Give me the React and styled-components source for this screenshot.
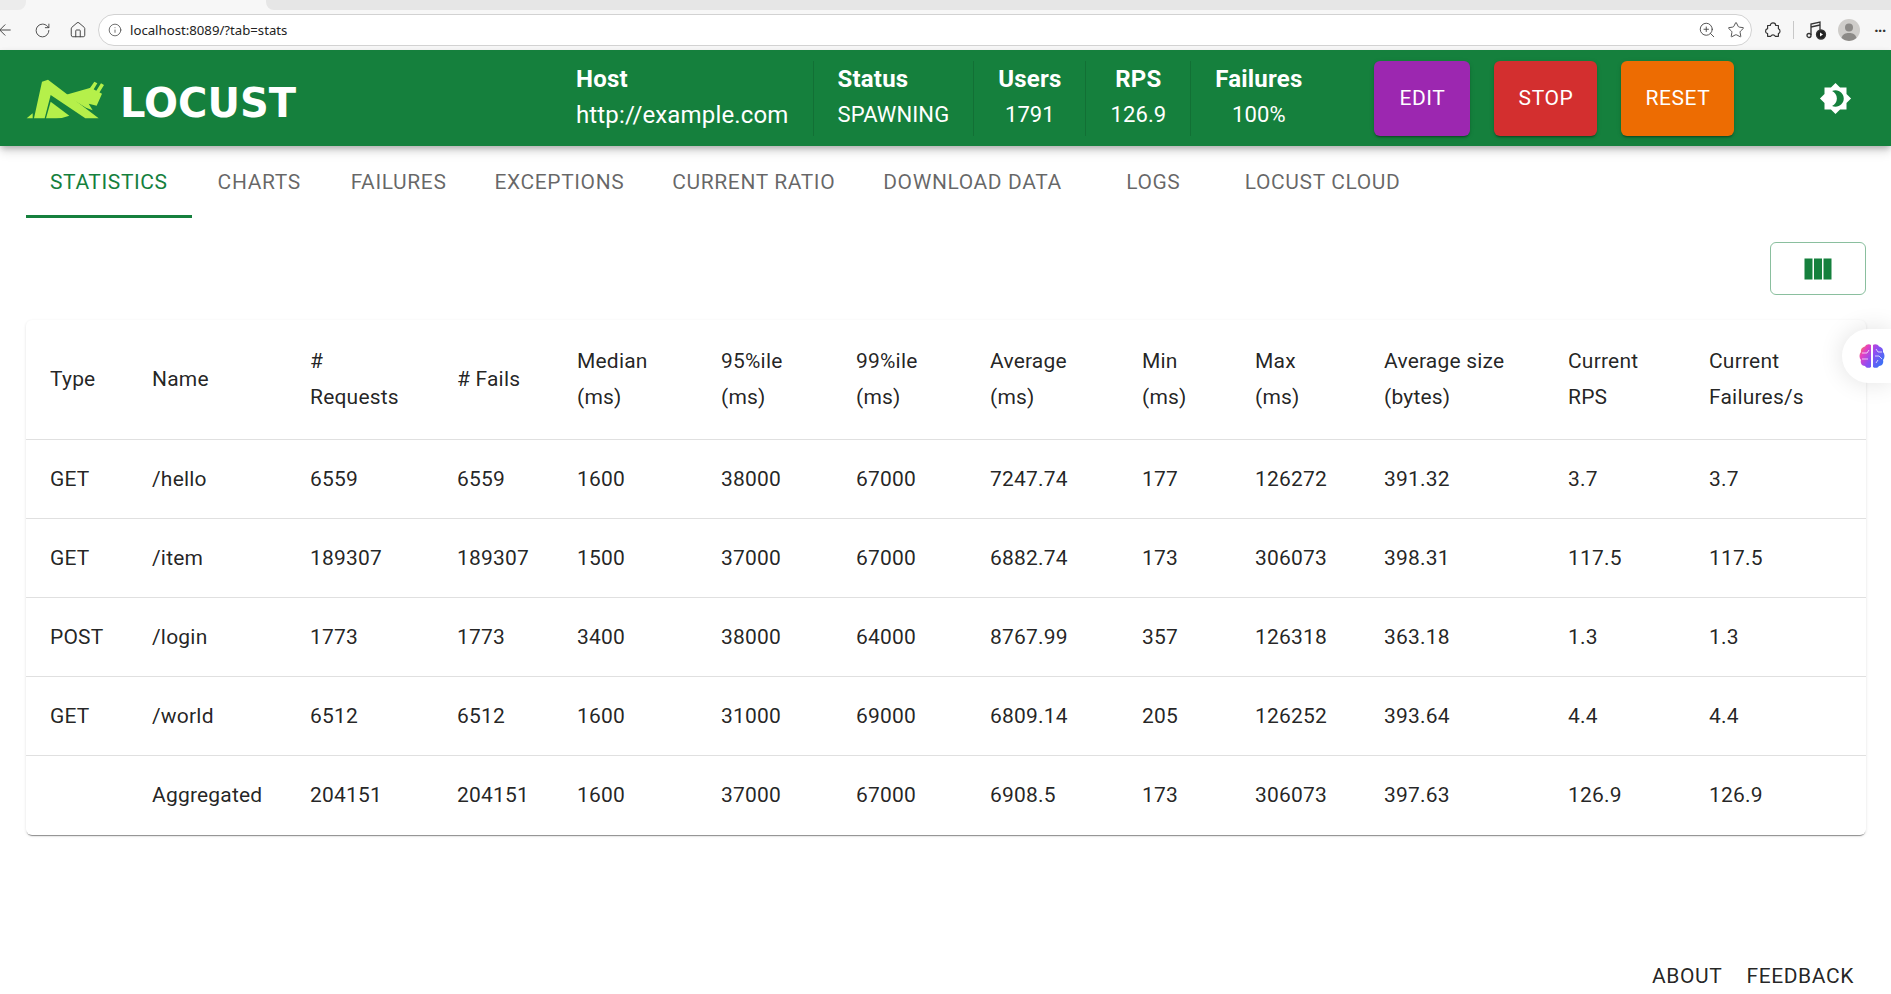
import React from "react"
import styled, { createGlobalStyle } from "styled-components"
import { ArrowLeft, RotateCw, Home, Info, ZoomIn, Star } from "lucide-react"

const GlobalStyle = createGlobalStyle`
body{
    margin: 0;
    background: #fff;
    font-family: Roboto, "Liberation Sans", sans-serif;
    overflow: hidden;
}
`

const tabs = ["Statistics", "Charts", "Failures", "Exceptions", "Current ratio", "Download data", "Logs", "Locust Cloud"]

const columns = [
    { label: ["Type"], width: 102 },
    { label: ["Name"], width: 158 },
    { label: ["#", "Requests"], width: 147 },
    { label: ["# Fails"], width: 120 },
    { label: ["Median", "(ms)"], width: 144 },
    { label: ["95%ile", "(ms)"], width: 135 },
    { label: ["99%ile", "(ms)"], width: 134 },
    { label: ["Average", "(ms)"], width: 152 },
    { label: ["Min", "(ms)"], width: 113 },
    { label: ["Max", "(ms)"], width: 129 },
    { label: ["Average size", "(bytes)"], width: 184 },
    { label: ["Current", "RPS"], width: 141 },
    { label: ["Current", "Failures/s"], width: 181 },
]

const rows = [
    ["GET", "/hello", "6559", "6559", "1600", "38000", "67000", "7247.74", "177", "126272", "391.32", "3.7", "3.7"],
    ["GET", "/item", "189307", "189307", "1500", "37000", "67000", "6882.74", "173", "306073", "398.31", "117.5", "117.5"],
    ["POST", "/login", "1773", "1773", "3400", "38000", "64000", "8767.99", "357", "126318", "363.18", "1.3", "1.3"],
    ["GET", "/world", "6512", "6512", "1600", "31000", "69000", "6809.14", "205", "126252", "393.64", "4.4", "4.4"],
    ["", "Aggregated", "204151", "204151", "1600", "37000", "67000", "6908.5", "173", "306073", "397.63", "126.9", "126.9"],
]

const stats = [
    { title: "Host", value: "http://example.com", host: true, align: "flex-start" },
    { title: "Status", value: "SPAWNING", align: "flex-start" },
    { title: "Users", value: "1791", align: "center" },
    { title: "RPS", value: "126.9", align: "center" },
    { title: "Failures", value: "100%", align: "center" },
]

function LocustMark(){
    return(
        <svg width="100" height="55" viewBox="0 0 300 165" fill="#b5f04a">
            <path d="M66 32L84 26L236 142H196L92 72L74 142H42Z" />
            <path d="M20 142L38 127V142Z" />
            <path d="M78 142L92 92L148 134Q128 142 108 142Z" />
            <path d="M136 72L212 50L246 68L230 104L206 98L218 118L198 110Z" />
            <path d="M208 54L223 32L232 37L218 60ZM227 62L243 37L252 42L236 68Z" />
        </svg>
    )
}

function ThemeIcon(){
    return(
        <svg width="33" height="33" viewBox="0 0 24 24" fill="#fff">
            <path d="M20 8.69V4h-4.69L12 .69 8.69 4H4v4.69L.69 12 4 15.31V20h4.69L12 23.31 15.31 20H20v-4.69L23.31 12 20 8.69zM12 18c-.89 0-1.74-.2-2.5-.55C11.56 16.5 13 14.42 13 12s-1.44-4.5-3.5-5.45C10.26 6.2 11.11 6 12 6c3.31 0 6 2.69 6 6s-2.69 6-6 6z" />
        </svg>
    )
}

function ColumnsIcon(){
    return(
        <svg width="36" height="36" viewBox="0 0 24 24" fill="#15803d">
            <path d="M14.67 5v14H9.33V5h5.34zm1 14H21V5h-5.33v14zm-7.34 0V5H3v14h5.33z" />
        </svg>
    )
}

function BrainIcon(){
    return(
        <svg width="32" height="30" viewBox="0 0 30 30">
            <defs>
                <linearGradient id="brainGradient" gradientUnits="userSpaceOnUse" x1="2" y1="4" x2="26" y2="20">
                    <stop offset="0" stopColor="#f99a2a" />
                    <stop offset="0.28" stopColor="#e63fc2" />
                    <stop offset="0.6" stopColor="#8f4df2" />
                    <stop offset="1" stopColor="#3f6ff5" />
                </linearGradient>
            </defs>
            <path fill="url(#brainGradient)" d="M14 4v22c-2 1.5-5 1-6-1-3 0-5-3-4-6-2-2-2-6 0-8-.5-3 1.5-5 4-5.5C9 3.5 12 2.5 14 4zM16 4v22c2 1.5 5 1 6-1 3 0 5-3 4-6 2-2 2-6 0-8 .5-3-1.5-5-4-5.5C21 3.5 18 2.5 16 4z" />
            <path fill="none" stroke="#fff" strokeOpacity="0.7" strokeWidth="1" d="M5 12h5l2-3M5 18h6M19 8l2 3h4M18 15h4l3 3M19 22l2-3" />
        </svg>
    )
}

function PuzzleIcon(){
    return(
        <svg width="18" height="18" viewBox="0 0 20 20" fill="none" stroke="#333" strokeWidth="1.3">
            <path d="M4 5h3a3 3 0 0 1 6 0h3v3.5a3 3 0 0 1 0 5.5V17h-3.5a2.8 2.8 0 0 0-5 0H4v-3a2.8 2.8 0 0 1 0-5.5z" strokeLinejoin="round" />
        </svg>
    )
}

function MusicIcon(){
    return(
        <svg width="22" height="22" viewBox="0 0 22 22" fill="none" stroke="#333" strokeWidth="1.3">
            <path d="M6 16V5l9-2v8" />
            <path d="M6 8l9-2" />
            <circle cx="4" cy="16.5" r="2" />
            <circle cx="16" cy="15.5" r="4.5" fill="#222" />
            <path d="M15 13.5l3 2-3 2z" fill="#fff" stroke="none" />
        </svg>
    )
}

function AvatarIcon(){
    return(
        <svg width="22" height="22" viewBox="0 0 22 22">
            <circle cx="11" cy="11" r="11" fill="#cfcdca" />
            <circle cx="11" cy="8.5" r="4" fill="#8c8a87" />
            <path d="M3.5 19c1-4 4-5 7.5-5s6.5 1 7.5 5a11 11 0 0 1-15 0z" fill="#8c8a87" />
        </svg>
    )
}

export default function App(){
    return(
        <>
            <GlobalStyle />
            <TabStrip>
                <BrowserTab />
                <StripGap />
            </TabStrip>
            <BrowserBar>
                <BackSlot><ArrowLeft size={18} strokeWidth={1.3} color="#444" /></BackSlot>
                <BrowserIcon><RotateCw size={17} strokeWidth={1.3} color="#444" /></BrowserIcon>
                <BrowserIcon><Home size={18} strokeWidth={1.3} color="#444" /></BrowserIcon>
                <UrlBar>
                    <Info size={14} strokeWidth={1.3} color="#444" />
                    <UrlText>localhost:8089/?tab=stats</UrlText>
                    <UrlActions>
                        <ZoomIn size={18} strokeWidth={1.2} color="#444" />
                        <Star size={18} strokeWidth={1.2} color="#444" />
                    </UrlActions>
                </UrlBar>
                <BrowserTools>
                    <PuzzleIcon />
                    <ToolDivider />
                    <MusicIcon />
                    <AvatarIcon />
                    <Dots>···</Dots>
                </BrowserTools>
            </BrowserBar>
            <Header>
                <Logo>
                    <LocustMark />
                    <LogoText>LOCUST</LogoText>
                </Logo>
                <Stats>
                    {stats.map((stat) => (
                        <Stat key={stat.title} $align={stat.align}>
                            <StatTitle>{stat.title}</StatTitle>
                            <StatValue $host={stat.host}>{stat.value}</StatValue>
                        </Stat>
                    ))}
                </Stats>
                <Actions>
                    <ActionButton $color="#9c27b0" $width={96}>Edit</ActionButton>
                    <ActionButton $color="#d32f2f" $width={103}>Stop</ActionButton>
                    <ActionButton $color="#ed6c02" $width={113}>Reset</ActionButton>
                </Actions>
                <ThemeButton><ThemeIcon /></ThemeButton>
            </Header>
            <Main>
                <TabRow>
                    {tabs.map((tab, index) => (
                        <Tab key={tab} $active={index === 0}>{tab}</Tab>
                    ))}
                </TabRow>
                <Toolbar>
                    <ColumnButton><ColumnsIcon /></ColumnButton>
                </Toolbar>
                <Card>
                    <Table>
                        <colgroup>
                            {columns.map((column, index) => <col key={index} style={{ width: column.width }} />)}
                        </colgroup>
                        <thead>
                            <tr>
                                {columns.map((column, index) => (
                                    <Th key={index}>
                                        {column.label.map((line) => <HeadLine key={line}>{line}</HeadLine>)}
                                    </Th>
                                ))}
                            </tr>
                        </thead>
                        <tbody>
                            {rows.map((row, rowIndex) => (
                                <tr key={rowIndex}>
                                    {row.map((cell, cellIndex) => (
                                        <Td key={cellIndex} $last={rowIndex === rows.length - 1}>{cell}</Td>
                                    ))}
                                </tr>
                            ))}
                        </tbody>
                    </Table>
                </Card>
            </Main>
            <Footer>
                <FooterLink>About</FooterLink>
                <FooterLink>Feedback</FooterLink>
            </Footer>
            <BrainTab><BrainIcon /></BrainTab>
        </>
    )
}

const TabStrip = styled.div`
display: flex;
height: 10px;
background: #f7f7f7;
`
const BrowserTab = styled.div`
width: 26px;
background: #ececec;
border-radius: 0 0 8px 0;
`
const StripGap = styled.div`
flex: 1;
margin-left: 240px;
background: #e6e6e6;
border-radius: 0 0 0 8px;
`
const BrowserBar = styled.div`
display: flex;
align-items: center;
height: 40px;
background: #f7f7f7;
`
const BackSlot = styled.div`
display: flex;
margin-left: -4px;
width: 29px;
`
const BrowserIcon = styled.div`
display: flex;
justify-content: center;
width: 35px;
`
const UrlBar = styled.div`
display: flex;
align-items: center;
box-sizing: border-box;
width: 1654px;
height: 32px;
margin-left: 3px;
padding: 0 6px 0 9px;
background: #fff;
border: 1px solid #d2d2d2;
border-radius: 16px;
`
const UrlText = styled.span`
margin-left: 8px;
font-family: "Noto Sans", sans-serif;
font-size: 13.2px;
color: #222;
`
const UrlActions = styled.div`
display: flex;
align-items: center;
gap: 11px;
margin-left: auto;
`
const BrowserTools = styled.div`
display: flex;
align-items: center;
margin-left: 12px;
gap: 11px;
`
const ToolDivider = styled.div`
width: 1px;
height: 18px;
background: #c8c8c8;
`
const Dots = styled.span`
margin-left: 3px;
font-size: 16px;
font-weight: 700;
color: #333;
letter-spacing: -1px;
`
const Header = styled.header`
position: relative;
display: flex;
align-items: center;
height: 96px;
background: #15803d;
box-shadow: 0 3px 6px -1px rgba(0,0,0,.25), 0 6px 10px rgba(0,0,0,.12);
color: #fff;
`
const Logo = styled.div`
display: flex;
align-items: center;
margin-left: 20px;
width: 532px;
`
const LogoText = styled.span`
padding-top: 9px;
font-family: "DejaVu Sans", sans-serif;
font-weight: 700;
font-size: 40px;
line-height: 40px;
`
const Stats = styled.div`
display: flex;
align-items: center;
`
const Stat = styled.div`
display: flex;
flex-direction: column;
align-items: ${({ $align }) => $align};
justify-content: center;
box-sizing: border-box;
height: 75px;
padding: 0 24px;
border-right: 1px solid rgba(0,0,0,.12);
&:last-child{
    border-right: none;
}
`
const StatTitle = styled.span`
font-size: 24px;
font-weight: 700;
line-height: 36px;
letter-spacing: 0.2px;
margin-top: -2px;
`
const StatValue = styled.span`
font-size: ${({ $host }) => ($host ? "24px" : "22px")};
line-height: 36px;
letter-spacing: ${({ $host }) => ($host ? "0.15px" : "0.1px")};
`
const Actions = styled.div`
display: flex;
gap: 24px;
margin-left: 48px;
`
const ActionButton = styled.button`
box-sizing: border-box;
width: ${({ $width }) => $width}px;
height: 75px;
border: none;
border-radius: 6px;
background: ${({ $color }) => $color};
box-shadow: 0 3px 1px -2px rgba(0,0,0,.2), 0 2px 2px rgba(0,0,0,.14), 0 1px 5px rgba(0,0,0,.12);
color: #fff;
font-family: Roboto, sans-serif;
font-size: 21px;
font-weight: 400;
letter-spacing: 0.6px;
text-transform: uppercase;
`
const ThemeButton = styled.div`
display: flex;
margin-left: 85px;
`
const Main = styled.main`
padding: 0 25px 0 26px;
`
const TabRow = styled.nav`
display: flex;
height: 72px;
`
const Tab = styled.div`
display: flex;
align-items: center;
justify-content: center;
box-sizing: border-box;
min-width: 135px;
padding: 0 24px;
font-size: 21px;
letter-spacing: 0.6px;
text-transform: uppercase;
color: ${({ $active }) => ($active ? "#15803d" : "rgba(0,0,0,.6)")};
box-shadow: ${({ $active }) => ($active ? "inset 0 -3px 0 #15803d" : "none")};
`
const Toolbar = styled.div`
display: flex;
justify-content: flex-end;
padding-top: 24px;
height: 79px;
margin-bottom: -1px;
`
const ColumnButton = styled.div`
display: flex;
align-items: center;
justify-content: center;
box-sizing: border-box;
width: 96px;
height: 53px;
border: 1.5px solid rgba(21,128,61,.5);
border-radius: 6px;
`
const Card = styled.div`
border-radius: 6px;
background: #fff;
box-shadow: 0 2px 1px -1px rgba(0,0,0,.4), 0 1px 3px rgba(0,0,0,.12);
overflow: hidden;
`
const Table = styled.table`
width: 100%;
table-layout: fixed;
border-collapse: collapse;
`
const Th = styled.th`
box-sizing: border-box;
height: 119px;
padding: 0 0 0 24px;
border-bottom: 1px solid #e0e0e0;
text-align: left;
font-size: 21px;
font-weight: 400;
letter-spacing: 0.2px;
color: rgba(0,0,0,.87);
`
const HeadLine = styled.div`
line-height: 36px;
`
const Td = styled.td`
box-sizing: border-box;
height: ${({ $last }) => ($last ? "80px" : "79px")};
padding: 0 0 0 24px;
border-bottom: ${({ $last }) => ($last ? "none" : "1px solid #e0e0e0")};
font-size: 21px;
letter-spacing: 0.2px;
color: rgba(0,0,0,.87);
`
const Footer = styled.footer`
display: flex;
justify-content: flex-end;
gap: 24px;
margin-top: 123px;
padding-right: 37px;
`
const FooterLink = styled.span`
font-size: 21px;
line-height: 36px;
letter-spacing: 0.6px;
text-transform: uppercase;
color: rgba(0,0,0,.87);
`
const BrainTab = styled.div`
position: fixed;
top: 329px;
right: 0;
display: flex;
align-items: center;
box-sizing: border-box;
width: 49px;
height: 54px;
padding-left: 14px;
background: #fff;
border-radius: 27px 0 0 27px;
box-shadow: 0 0 24px rgba(0,0,0,.12);
`
